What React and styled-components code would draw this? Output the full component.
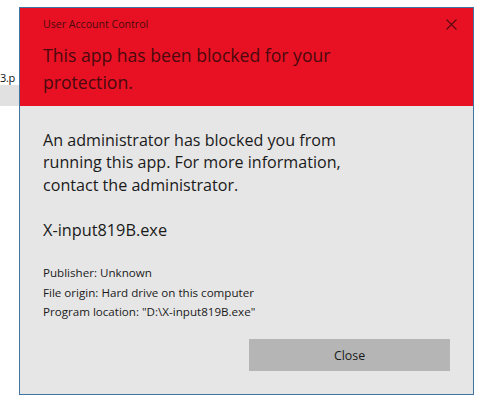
import React from "react";
import styled, { createGlobalStyle } from "styled-components";

const Global = createGlobalStyle`
  html, body { margin: 0; padding: 0; background: #ffffff; }
  body { font-family: "Open Sans", "Noto Sans", sans-serif; }
`;

const Page = styled.div`
  display: flex;
  align-items: flex-start;
  width: 490px;
  height: 405px;
  padding-top: 7px;
  box-sizing: border-box;
  overflow: hidden;
`;

const BehindStrip = styled.div`
  width: 19px;
  flex: none;
  display: flex;
  flex-direction: column;
  padding-top: 64px;
`;

const BehindText = styled.div`
  font-size: 11px;
  line-height: 14px;
  color: #111;
  white-space: nowrap;
  letter-spacing: -0.3px;
`;

const BehindBand = styled.div`
  height: 21px;
  background: #e1e1e1;
`;

const Dialog = styled.div`
  width: 455px;
  height: 388px;
  box-sizing: border-box;
  border: 1px solid #3f75a3;
  background: #e6e6e6;
  display: flex;
  flex-direction: column;
  flex: none;
`;

const Header = styled.div`
  background: #e81123;
  height: 98px;
  box-sizing: border-box;
  padding: 8px 23px 0 23px;
  display: flex;
  flex-direction: column;
  position: relative;
  color: #4a090e;
`;

const Caption = styled.div`
  font-size: 10.6px;
  line-height: 16px;
`;

const Title = styled.div`
  margin-top: 9.5px;
  font-size: 17.6px;
  line-height: 27px;
`;

const CloseX = styled.svg`
  position: absolute;
  top: 11px;
  right: 16px;
  width: 11px;
  height: 11px;
`;

const Body = styled.div`
  flex: 1;
  display: flex;
  flex-direction: column;
  padding: 22.5px 23px 23px 23px;
  color: #1a1a1a;
`;

const Message = styled.div`
  font-size: 16.1px;
  line-height: 22.5px;
`;

const FileName = styled.div`
  margin-top: 22.5px;
  font-size: 16.3px;
  line-height: 22.5px;
`;

const Details = styled.div`
  margin-top: 22px;
  font-size: 11.6px;
  line-height: 19.5px;
`;

const Footer = styled.div`
  margin-top: auto;
  display: flex;
  justify-content: flex-end;
`;

const Button = styled.button`
  width: 201px;
  height: 32px;
  border: none;
  background: #b5b5b5;
  font-family: "Open Sans", "Noto Sans", sans-serif;
  font-size: 12.4px;
  color: #1a1a1a;
  padding: 0;
`;

export default function App() {
  return (
    <>
      <Global />
      <Page>
        <BehindStrip>
          <BehindText>3.p</BehindText>
          <BehindBand />
        </BehindStrip>
        <Dialog>
          <Header>
            <Caption>User Account Control</Caption>
            <Title>
              This app has been blocked for your
              <br />
              protection.
            </Title>
            <CloseX viewBox="0 0 11 11">
              <path d="M0.5 0.5 L10.5 10.5 M10.5 0.5 L0.5 10.5" stroke="#5a0b12" strokeWidth="1.1" fill="none" />
            </CloseX>
          </Header>
          <Body>
            <Message>
              An administrator has blocked you from
              <br />
              running this app. For more information,
              <br />
              contact the administrator.
            </Message>
            <FileName>X-input819B.exe</FileName>
            <Details>
              Publisher: Unknown
              <br />
              File origin: Hard drive on this computer
              <br />
              Program location: "D:\X-input819B.exe"
            </Details>
            <Footer>
              <Button>Close</Button>
            </Footer>
          </Body>
        </Dialog>
      </Page>
    </>
  );
}
